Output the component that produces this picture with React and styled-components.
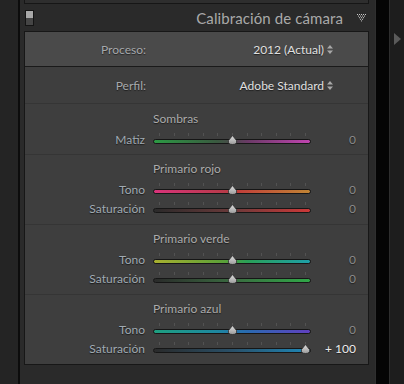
import React from 'react';
import styled, { createGlobalStyle } from 'styled-components';

const GlobalStyle = createGlobalStyle`
  html, body {
    margin: 0;
    padding: 0;
    background: #2a2a2a;
    overflow: hidden;
  }
  body {
    font-family: Lato, "Liberation Sans", sans-serif;
  }
`;

const Frame = styled.div`
  display: flex;
  width: 404px;
  height: 384px;
`;

const LeftStrip = styled.div`
  width: 18px;
  background: #242424;
`;

const Rule = styled.div`
  width: ${(p) => p.w || 1}px;
  background: ${(p) => p.color || '#0c0c0c'};
`;

const Main = styled.div`
  width: 355px;
  background: #2a2a2a;
  padding: 0 6px 0 4px;
  box-sizing: border-box;
  display: flex;
  flex-direction: column;
`;

const PrevPanel = styled.div`
  height: 3px;
  background: #2e2e2e;
  border: 1px solid #161616;
  border-top: none;
`;

const Header = styled.div`
  height: 27px;
  display: flex;
  align-items: center;
  padding: 0 3px 0 1px;
`;

const Toggle = styled.div`
  width: 7px;
  height: 14px;
  border: 1px solid #141414;
  background: linear-gradient(#a8a8a8 0 50%, #454545 50% 100%);
`;

const Title = styled.div`
  flex: 1;
  text-align: right;
  font-size: 15px;
  color: #a9a9a9;
  padding-right: 14px;
  letter-spacing: 0.1px;
`;

const Box = styled.div`
  border: 1px solid #171717;
  background: #3e3e3e;
  display: flex;
  flex-direction: column;
`;

const Band = styled.div`
  height: ${(p) => p.h}px;
  background: ${(p) => p.bg || '#3e3e3e'};
  border-bottom: 1px solid ${(p) => p.line || '#353535'};
  display: flex;
  align-items: center;
  font-size: 12px;
`;

const BandLabel = styled.div`
  width: 121px;
  text-align: right;
  color: #a6a9ac;
  text-shadow: 0 1px 1px rgba(0, 0, 0, 0.55);
`;

const BandValue = styled.div`
  flex: 1;
  display: flex;
  justify-content: flex-end;
  align-items: center;
  gap: 3px;
  padding-right: 35px;
  color: #e0e0e0;
  text-shadow: 0 1px 1px rgba(0, 0, 0, 0.55);
`;

const Section = styled.div`
  padding: ${(p) => p.pt || 6}px 0 ${(p) => p.pb || 6}px;
  border-bottom: ${(p) => (p.last ? 'none' : '1px solid #353535')};
`;

const SectionTitle = styled.div`
  height: 16px;
  line-height: 16px;
  margin: 0 0 3px 128px;
  font-size: 12px;
  color: #ababab;
  text-shadow: 0 1px 1px rgba(0, 0, 0, 0.55);
`;

const Row = styled.div`
  height: 19px;
  display: grid;
  grid-template-columns: 120px 158px 37px;
  column-gap: 8px;
  align-items: center;
  font-size: 12px;
`;

const RowLabel = styled.div`
  text-align: right;
  color: #a0aab2;
  text-shadow: 0 1px 1px rgba(0, 0, 0, 0.6);
`;

const Value = styled.div`
  text-align: right;
  color: ${(p) => (p.active ? '#ececec' : '#8a8a8a')};
  text-shadow: 0 1px 1px rgba(0, 0, 0, 0.5);
`;

const SliderWrap = styled.div`
  position: relative;
  height: 19px;
`;

const Ticks = styled.div`
  position: absolute;
  left: 6px;
  right: 5px;
  top: 3px;
  height: 3px;
  background: repeating-linear-gradient(
    90deg,
    #525252 0 1px,
    transparent 1px 14.6px
  );
`;

const Track = styled.div`
  position: absolute;
  left: 0;
  right: 0;
  top: 9px;
  height: 3px;
  border: 1px solid #161616;
  border-radius: 3px;
  background: ${(p) => p.grad};
`;

const Thumb = styled.svg`
  position: absolute;
  top: 5px;
  width: 11px;
  height: 10px;
  margin-left: -5.5px;
`;

const RightStrip = styled.div`
  width: 14px;
  background: #1d1d1d;
  display: flex;
  justify-content: center;
  padding-top: 33px;
  box-sizing: border-box;
`;

const Spinner = () => (
  <svg width="6" height="9" viewBox="0 0 6 9">
    <path d="M0 3.5 L3 0 L6 3.5Z M0 5.5 L3 9 L6 5.5Z" fill="#a8a8a8" />
  </svg>
);

const Collapse = () => {
  const dots = [];
  const rows = [[0, 2, 4, 6, 8], [1, 3, 5, 7], [2, 4, 6], [3, 5], [4]];
  rows.forEach((xs, r) =>
    xs.forEach((x) => dots.push(<rect key={r + '-' + x} x={x} y={r * 1.6} width="1" height="1" fill="#c8c8c8" />))
  );
  return (
    <svg width="9" height="8" viewBox="0 0 9 8">
      {dots}
    </svg>
  );
};

const Slider = ({ grad, pos }) => (
  <SliderWrap>
    <Ticks />
    <Track grad={grad} />
    <Thumb style={{ left: `calc(6px + (100% - 12px) * ${pos / 100})` }} viewBox="0 0 11 10">
      <defs>
        <linearGradient id="th" x1="0" y1="0" x2="0" y2="1">
          <stop offset="0" stopColor="#e0e0e0" />
          <stop offset="1" stopColor="#9a9a9a" />
        </linearGradient>
      </defs>
      <path d="M5.5 0.5 L9.5 5.5 Q10.5 9.5 5.5 9.5 Q0.5 9.5 1.5 5.5 Z" fill="url(#th)" stroke="#2a2a2a" strokeWidth="0.8" />
    </Thumb>
  </SliderWrap>
);

const sections = [
  {
    title: 'Sombras',
    pt: 7,
    pb: 5,
    rows: [{ label: 'Matiz', grad: 'linear-gradient(90deg, #2c9a44, #3a5a40 40%, #4a4a4a 50%, #6a3a66 60%, #c044b0)', pos: 50, value: '0' }],
  },
  {
    title: 'Primario rojo',
    rows: [
      { label: 'Tono', grad: 'linear-gradient(90deg, #d8337a, #b83a4a 45%, #c2403a 55%, #c08434)', pos: 50, value: '0' },
      { label: 'Saturación', grad: 'linear-gradient(90deg, #2a2a2a, #6a3a3a 50%, #cc3838)', pos: 50, value: '0' },
    ],
  },
  {
    title: 'Primario verde',
    rows: [
      { label: 'Tono', grad: 'linear-gradient(90deg, #a8b030, #5aa038 45%, #2aa058 60%, #1ea0a8)', pos: 50, value: '0' },
      { label: 'Saturación', grad: 'linear-gradient(90deg, #2a2a2a, #3a6a40 50%, #30a848)', pos: 50, value: '0' },
    ],
  },
  {
    title: 'Primario azul',
    rows: [
      { label: 'Tono', grad: 'linear-gradient(90deg, #1ea080, #1e88a0 40%, #2a6ab0 60%, #6040c0)', pos: 50, value: '0' },
      { label: 'Saturación', grad: 'linear-gradient(90deg, #2a2a2a, #2a5068 50%, #1e88b8)', pos: 100, value: '+ 100', active: true },
    ],
  },
];

export default function App() {
  return (
    <>
      <GlobalStyle />
      <Frame>
        <LeftStrip />
        <Rule w={2} />
        <Main>
          <PrevPanel />
          <Header>
            <Toggle />
            <Title>Calibración de cámara</Title>
            <Collapse />
          </Header>
          <Box>
            <Band h={34} bg="#4a4a4a" line="#1a1a1a">
              <BandLabel>Proceso:</BandLabel>
              <BandValue>
                2012 (Actual) <Spinner />
              </BandValue>
            </Band>
            <Band h={36}>
              <BandLabel>Perfil:</BandLabel>
              <BandValue>
                Adobe Standard <Spinner />
              </BandValue>
            </Band>
            {sections.map((s, i) => (
              <Section key={s.title} pt={s.pt} pb={s.pb} last={i === sections.length - 1}>
                <SectionTitle>{s.title}</SectionTitle>
                {s.rows.map((r) => (
                  <Row key={r.label}>
                    <RowLabel>{r.label}</RowLabel>
                    <Slider grad={r.grad} pos={r.pos} />
                    <Value active={r.active}>{r.value}</Value>
                  </Row>
                ))}
              </Section>
            ))}
          </Box>
        </Main>
        <Rule color="#2f2f2f" />
        <Rule w={13} color="#050505" />
        <Rule color="#2e2e2e" />
        <RightStrip>
          <svg width="7" height="12" viewBox="0 0 7 12">
            <path d="M0 0 L7 6 L0 12Z" fill="#5a5a5a" />
          </svg>
        </RightStrip>
      </Frame>
    </>
  );
}
